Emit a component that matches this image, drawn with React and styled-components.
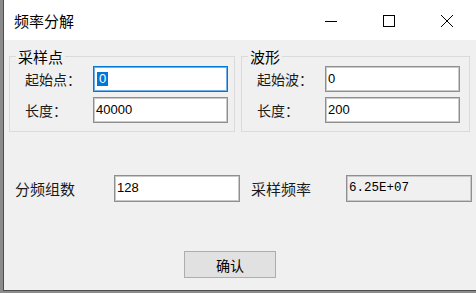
import {createGlobalStyle, styled} from 'styled-components'

const GlobalStyle = createGlobalStyle`
  html, body {
    margin: 0;
    padding: 0;
    background: #8b8b8b;
  }
  body {
    font-family: "Noto Sans CJK SC", "Liberation Sans", sans-serif;
    color: #000;
  }
`

const Screen = styled.div`
  width: 476px;
  height: 293px;
  box-sizing: border-box;
  padding: 0 2px 2px 3px;
  display: flex;
  background: #8b8b8b;
`

const Window = styled.div`
  flex: 1;
  display: flex;
  flex-direction: column;
  border: 1px solid #4d4d4d;
  border-top: none;
  background: #f0f0f0;
`

const TitleBar = styled.div`
  height: 40px;
  flex-shrink: 0;
  display: flex;
  align-items: center;
  background: #fff;
`

const Title = styled.div`
  flex: 1;
  padding-left: 10px;
  font-size: 15px;
  line-height: 20px;
  margin-top: 1px;
`

const CaptionButton = styled.div`
  width: 58px;
  height: 40px;
  display: flex;
  align-items: center;
  justify-content: center;
  margin-top: 2px;
`

const Body = styled.div`
  flex: 1;
  padding: 0 4px 0 5px;
`

const Groups = styled.div`
  display: flex;
  gap: 6px;
  margin-top: 7px;
`

const Group = styled.fieldset`
  width: ${p => p.$w}px;
  box-sizing: border-box;
  flex-shrink: 0;
  min-width: 0;
  margin: 0;
  padding: 0 6px 8px 15px;
  border: 1px solid #dadada;
  display: flex;
  flex-direction: column;
  gap: 5px;
`

const Legend = styled.legend`
  font-size: 15px;
  line-height: 19px;
  padding: 0 2px;
  margin-left: -9px;
`

const Row = styled.div`
  display: flex;
  align-items: center;
`

const Label = styled.div`
  width: ${p => p.$w}px;
  flex-shrink: 0;
  font-size: ${p => p.$size || 14}px;
  line-height: 20px;
  color: #1a1a1a;
`

const Field = styled.div`
  width: ${p => p.$w}px;
  height: ${p => p.$h || 26}px;
  box-sizing: border-box;
  flex-shrink: 0;
  display: flex;
  align-items: ${p => (p.$top ? 'flex-start' : 'center')};
  padding: ${p => (p.$top ? '4px 2px 0' : '0 2px')};
  background: ${p => (p.$readOnly ? '#f0f0f0' : '#fff')};
  border: 1px solid ${p => (p.$focus ? '#0078d7' : '#8f8f8f')};
  box-shadow: inset 0 0 0 1px ${p => (p.$focus ? '#6fb0ea' : '#c9c9c9')};
  font-family: ${p => (p.$mono ? '"Liberation Mono", monospace' : '"Liberation Sans", sans-serif')};
  font-size: ${p => (p.$mono ? '12.5px' : '13px')};
  line-height: 16px;
`

const Selected = styled.span`
  background: #0078d7;
  color: #fff;
  padding: 0 2px;
  line-height: 14px;
  margin-left: 1px;
`

const BottomRow = styled.div`
  display: flex;
  align-items: center;
  margin: 43px 0 0 6px;
`

const Spacer = styled.div`
  width: 11px;
  flex-shrink: 0;
`

const ButtonRow = styled.div`
  display: flex;
  margin: 49px 0 0 175px;
`

const Button = styled.div`
  width: 92px;
  height: 27px;
  box-sizing: border-box;
  display: flex;
  align-items: center;
  justify-content: center;
  background: #e1e1e1;
  border: 1px solid #adadad;
  font-size: 14px;
  line-height: 20px;
`

const Minimize = () => (
  <svg width="14" height="14" viewBox="0 0 14 14">
    <path d="M1 7.5h12" stroke="#000" strokeWidth="1" />
  </svg>
)

const Maximize = () => (
  <svg width="14" height="14" viewBox="0 0 14 14">
    <rect x="1.5" y="1.5" width="11" height="11" fill="none" stroke="#000" strokeWidth="1" />
  </svg>
)

const Close = () => (
  <svg width="14" height="14" viewBox="0 0 14 14">
    <path d="M1 1L13 13M13 1L1 13" stroke="#000" strokeWidth="1" />
  </svg>
)

const App = () => {
  return (
    <>
      <GlobalStyle />
      <Screen>
        <Window>
          <TitleBar>
            <Title>频率分解</Title>
            <CaptionButton><Minimize /></CaptionButton>
            <CaptionButton><Maximize /></CaptionButton>
            <CaptionButton><Close /></CaptionButton>
          </TitleBar>

          <Body>
            <Groups>
              <Group $w={226}>
                <Legend>采样点</Legend>
                <Row>
                  <Label $w={68}>起始点：</Label>
                  <Field $w={135} $focus><Selected>0</Selected></Field>
                </Row>
                <Row>
                  <Label $w={68}>长度：</Label>
                  <Field $w={135}>40000</Field>
                </Row>
              </Group>

              <Group $w={229}>
                <Legend>波形</Legend>
                <Row>
                  <Label $w={68}>起始波：</Label>
                  <Field $w={135}>0</Field>
                </Row>
                <Row>
                  <Label $w={68}>长度：</Label>
                  <Field $w={135}>200</Field>
                </Row>
              </Group>
            </Groups>

            <BottomRow>
              <Label $w={99} $size={15}>分频组数</Label>
              <Field $w={126} $h={27} $top>128</Field>
              <Spacer />
              <Label $w={95} $size={15}>采样频率</Label>
              <Field $w={126} $h={27} $top $readOnly $mono>6.25E+07</Field>
            </BottomRow>

            <ButtonRow>
              <Button>确认</Button>
            </ButtonRow>
          </Body>
        </Window>
      </Screen>
    </>
  )
}

export default App
